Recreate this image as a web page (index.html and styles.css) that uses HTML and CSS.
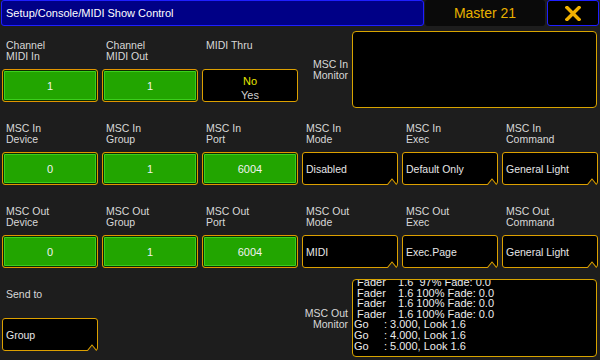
FILE: index.html
```html
<!DOCTYPE html>
<html>
<head>
<meta charset="utf-8">
<link rel="stylesheet" href="styles.css">
</head>
<body>
<div class="header">
  <div class="title">Setup/Console/MIDI Show Control</div>
  <div class="master">Master 21</div>
  <div class="close">
    <svg width="16" height="15" viewBox="0 0 16 15"><path d="M2 1.5 L14 13.5 M14 1.5 L2 13.5" stroke="#f0b000" stroke-width="3.4" stroke-linecap="square" fill="none"/></svg>
  </div>
</div>
<div class="grid">
  <div class="cell"><div class="lbl">Channel<br>MIDI In</div><div class="green">1</div></div>
  <div class="cell"><div class="lbl">Channel<br>MIDI Out</div><div class="green">1</div></div>
  <div class="cell"><div class="lbl">MIDI Thru</div><div class="toggle"><span class="on">No</span><span class="off">Yes</span></div></div>
  <div class="monitor top"><div class="mlbl">MSC In<br>Monitor</div><div class="mbox"></div></div>

  <div class="cell"><div class="lbl">MSC In<br>Device</div><div class="green">0</div></div>
  <div class="cell"><div class="lbl">MSC In<br>Group</div><div class="green">1</div></div>
  <div class="cell"><div class="lbl">MSC In<br>Port</div><div class="green">6004</div></div>
  <div class="cell"><div class="lbl">MSC In<br>Mode</div><div class="field">Disabled<svg class="notch" width="10" height="7" viewBox="0 0 10 7"><polygon points="0.5,7 5,1.5 9.5,7" fill="#1d1d1d"/><polyline points="0.5,6.5 5,1 9.5,6.5" fill="none" stroke="#dca000" stroke-width="1.1"/></svg></div></div>
  <div class="cell"><div class="lbl">MSC In<br>Exec</div><div class="field">Default Only<svg class="notch" width="10" height="7" viewBox="0 0 10 7"><polygon points="0.5,7 5,1.5 9.5,7" fill="#1d1d1d"/><polyline points="0.5,6.5 5,1 9.5,6.5" fill="none" stroke="#dca000" stroke-width="1.1"/></svg></div></div>
  <div class="cell"><div class="lbl">MSC In<br>Command</div><div class="field">General Light<svg class="notch" width="10" height="7" viewBox="0 0 10 7"><polygon points="0.5,7 5,1.5 9.5,7" fill="#1d1d1d"/><polyline points="0.5,6.5 5,1 9.5,6.5" fill="none" stroke="#dca000" stroke-width="1.1"/></svg></div></div>

  <div class="cell"><div class="lbl">MSC Out<br>Device</div><div class="green">0</div></div>
  <div class="cell"><div class="lbl">MSC Out<br>Group</div><div class="green">1</div></div>
  <div class="cell"><div class="lbl">MSC Out<br>Port</div><div class="green">6004</div></div>
  <div class="cell"><div class="lbl">MSC Out<br>Mode</div><div class="field">MIDI<svg class="notch" width="10" height="7" viewBox="0 0 10 7"><polygon points="0.5,7 5,1.5 9.5,7" fill="#1d1d1d"/><polyline points="0.5,6.5 5,1 9.5,6.5" fill="none" stroke="#dca000" stroke-width="1.1"/></svg></div></div>
  <div class="cell"><div class="lbl">MSC Out<br>Exec</div><div class="field">Exec.Page<svg class="notch" width="10" height="7" viewBox="0 0 10 7"><polygon points="0.5,7 5,1.5 9.5,7" fill="#1d1d1d"/><polyline points="0.5,6.5 5,1 9.5,6.5" fill="none" stroke="#dca000" stroke-width="1.1"/></svg></div></div>
  <div class="cell"><div class="lbl">MSC Out<br>Command</div><div class="field">General Light<svg class="notch" width="10" height="7" viewBox="0 0 10 7"><polygon points="0.5,7 5,1.5 9.5,7" fill="#1d1d1d"/><polyline points="0.5,6.5 5,1 9.5,6.5" fill="none" stroke="#dca000" stroke-width="1.1"/></svg></div></div>

  <div class="cell"><div class="lbl">Send to</div><div class="field">Group<svg class="notch" width="10" height="7" viewBox="0 0 10 7"><polygon points="0.5,7 5,1.5 9.5,7" fill="#1d1d1d"/><polyline points="0.5,6.5 5,1 9.5,6.5" fill="none" stroke="#dca000" stroke-width="1.1"/></svg></div></div>
  <div class="cell"></div>
  <div class="cell"></div>
  <div class="monitor bottom"><div class="mlbl">MSC Out<br>Monitor</div><div class="mbox"><pre class="log"> Fader    1.6  97% Fade: 0.0
 Fader    1.6 100% Fade: 0.0
 Fader    1.6 100% Fade: 0.0
 Fader    1.6 100% Fade: 0.0
Go     : 3.000, Look 1.6
Go     : 4.000, Look 1.6
Go     : 5.000, Look 1.6</pre></div></div>
</div>
</body>
</html>
```

FILE: styles.css
```css
* { box-sizing: border-box; }
body {
  margin: 0;
  width: 600px;
  height: 360px;
  overflow: hidden;
  background: #1d1d1d;
  font-family: "Liberation Sans", Arial, sans-serif;
}
.header {
  display: flex;
  height: 28px;
  padding-left: 1px;
}
.title {
  width: 423px;
  height: 26px;
  border: 1px solid #1f1fff;
  border-radius: 3px;
  background: #000086;
  color: #ffffff;
  font-size: 11px;
  line-height: 24px;
  padding-left: 4px;
}
.master {
  margin-left: 1px;
  width: 120px;
  height: 26px;
  border-radius: 3px;
  background: #0a0a0a;
  color: #e8b000;
  font-size: 14px;
  display: flex;
  align-items: center;
  justify-content: center;
}
.close {
  margin-left: 2px;
  width: 52px;
  height: 26px;
  border: 1px solid #1f1fff;
  border-radius: 3px;
  background: #000;
  display: flex;
  align-items: center;
  justify-content: center;
}
.grid {
  display: grid;
  grid-template-columns: repeat(6, 100px);
  grid-template-rows: repeat(4, 83px);
}
.cell {
  display: flex;
  flex-direction: column;
  padding: 0 2px;
}
.lbl {
  height: 41px;
  padding: 12px 0 0 4px;
  font-size: 10.5px;
  line-height: 11px;
  color: #d8d8d8;
}
.green {
  height: 33px;
  border: 1px solid #e29400;
  border-radius: 3px;
  background: #22a500;
  box-shadow: inset 0 0 0 1px #0c2c00, inset 0 0 0 2px #3ccf1c;
  display: flex;
  align-items: center;
  justify-content: center;
  color: #f2f2f2;
  font-size: 11px;
}
.toggle {
  height: 33px;
  border: 1px solid #dca000;
  border-radius: 3px;
  background: #000;
  display: flex;
  flex-direction: column;
  align-items: center;
  padding-top: 4px;
  font-size: 11px;
  line-height: 14px;
}
.on { color: #e6e600; }
.off { color: #cfcfcf; }
.field {
  position: relative;
  height: 33px;
  border: 1px solid #dca000;
  border-radius: 3px;
  background: #000;
  display: flex;
  align-items: center;
  padding-left: 3px;
  color: #e6e6e6;
  font-size: 10.5px;
}
.notch {
  position: absolute;
  right: 0;
  bottom: -1px;
}
.monitor {
  grid-column: span 3;
  display: flex;
  padding-right: 3px;
}
.mlbl {
  width: 52px;
  padding-right: 4px;
  align-self: center;
  text-align: right;
  font-size: 10.5px;
  line-height: 11px;
  color: #d8d8d8;
}
.mbox {
  flex: 1;
  border: 1px solid #d8a400;
  border-radius: 4px;
  background: #000;
  overflow: hidden;
}
.top .mbox { margin-top: 3px; height: 77px; }
.bottom .mbox { margin-top: 2px; height: 78px; }
.log {
  margin: -3px 0 0 1px;
  font-family: "Liberation Sans", Arial, sans-serif;
  font-size: 11px;
  line-height: 10.6px;
  color: #ececec;
}
```
